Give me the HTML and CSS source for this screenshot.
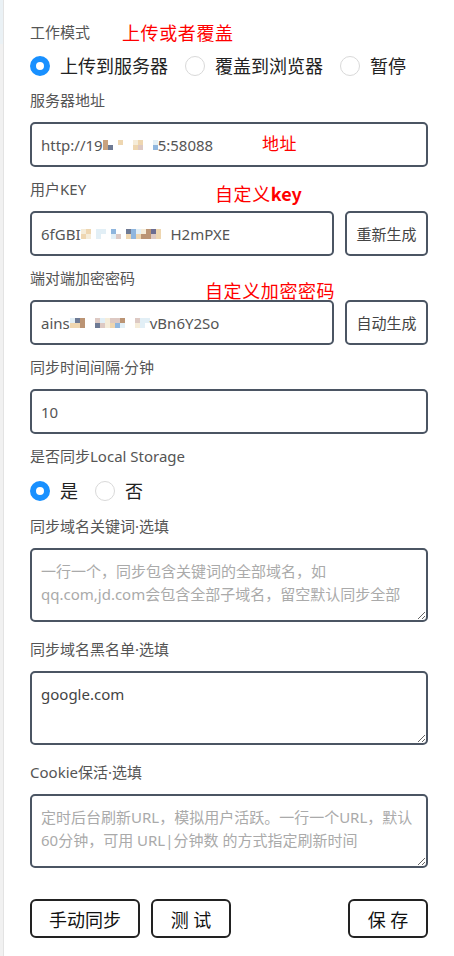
FILE: index.html
```html
<!DOCTYPE html>
<html lang="zh-CN">
<head>
<meta charset="utf-8">
<title>同步设置</title>
<link rel="stylesheet" href="styles.css">
</head>
<body>
<div class="page">
  <div class="edge"><div class="edge-top"></div></div>
  <form class="panel">
    <div class="label">工作模式</div>
    <div class="radios">
      <span class="radio"><span class="dot on"></span>上传到服务器</span>
      <span class="radio"><span class="dot"></span>覆盖到浏览器</span>
      <span class="radio"><span class="dot"></span>暂停</span>
    </div>

    <div class="label">服务器地址</div>
    <div class="input">http://19<span class="mosaic m11">
      <i class="c1"></i><i></i><i></i><i class="c3"></i><i></i><i></i><i class="c5"></i><i class="c3"></i><i></i><i></i><i class="c7"></i>
      <i class="c1"></i><i class="c2"></i><i></i><i></i><i></i><i></i><i class="c3"></i><i class="c9"></i><i></i><i></i><i class="c4"></i>
    </span>5:58088</div>

    <div class="label">用户KEY</div>
    <div class="row">
      <div class="input grow">6fGBI<span class="mosaic m18">
        <i class="c5"></i><i class="c3"></i><i></i><i class="c7"></i><i class="c7"></i><i></i><i class="c4"></i><i></i><i></i><i class="c2"></i><i class="c4"></i><i class="c7"></i><i class="c5"></i><i class="c8"></i><i class="c6"></i><i class="c3"></i><i></i><i></i>
        <i class="c3"></i><i class="c5"></i><i></i><i class="c7"></i><i></i><i></i><i class="c7"></i><i class="c9"></i><i></i><i class="c3"></i><i class="c4"></i><i class="c3"></i><i class="c8"></i><i class="c8"></i><i class="c9"></i><i class="c3"></i><i></i><i></i>
      </span>H2mPXE</div>
      <button type="button" class="side-btn">重新生成</button>
    </div>

    <div class="label">端对端加密密码</div>
    <div class="row">
      <div class="input grow">ains<span class="mosaic m16">
        <i class="c7"></i><i class="c2"></i><i class="c8"></i><i></i><i></i><i class="c9"></i><i class="c7"></i><i class="c5"></i><i class="c9"></i><i class="c9"></i><i class="c8"></i><i></i><i></i><i class="c9"></i><i class="c7"></i><i class="c7"></i>
        <i class="c3"></i><i class="c3"></i><i class="c8"></i><i></i><i></i><i class="c2"></i><i class="c9"></i><i class="c5"></i><i class="c3"></i><i class="c4"></i><i class="c7"></i><i></i><i></i><i class="c5"></i><i class="c7"></i><i></i>
      </span>vBn6Y2So</div>
      <button type="button" class="side-btn">自动生成</button>
    </div>

    <div class="label">同步时间间隔·分钟</div>
    <div class="input">10</div>

    <div class="label">是否同步Local Storage</div>
    <div class="radios tall">
      <span class="radio"><span class="dot on"></span>是</span>
      <span class="radio"><span class="dot"></span>否</span>
    </div>

    <div class="label">同步域名关键词·选填</div>
    <textarea class="area" placeholder="一行一个，同步包含关键词的全部域名，如&#10;qq.com,jd.com会包含全部子域名，留空默认同步全部"></textarea>

    <div class="label">同步域名黑名单·选填</div>
    <textarea class="area">google.com</textarea>

    <div class="label">Cookie保活·选填</div>
    <textarea class="area" placeholder="定时后台刷新URL，模拟用户活跃。一行一个URL，默认&#10;60分钟，可用 URL|分钟数 的方式指定刷新时间"></textarea>

    <div class="actions">
      <button type="button" class="btn wide">手动同步</button>
      <button type="button" class="btn">测 试</button>
      <button type="button" class="btn push">保 存</button>
    </div>
  </form>

  <span class="note n1">上传或者覆盖</span>
  <span class="note n2">地址</span>
  <span class="note n3">自定义<b>key</b></span>
  <span class="note n4">自定义加密密码</span>
</div>
</body>
</html>
```

FILE: styles.css
```css
html, body {
  margin: 0;
  padding: 0;
  background: #ffffff;
}

body {
  font-family: "Noto Sans", "Noto Sans CJK SC", sans-serif;
  color: #333;
}

.page {
  position: relative;
  display: flex;
  width: 454px;
  min-height: 956px;
}

.edge {
  width: 3px;
  flex: none;
  background: #f1f1f1;
  border-right: 1px solid #e3e3e3;
}

.edge-top {
  height: 44px;
  background: #eaf1f5;
}

.panel {
  flex: 1;
  display: flex;
  flex-direction: column;
  gap: 11px;
  padding: 21px 26px 0 26px;
  margin: 0;
}

.label {
  height: 22px;
  line-height: 22px;
  font-size: 15px;
  color: #555;
  white-space: nowrap;
}

.radios {
  height: 24px;
  display: flex;
  align-items: center;
}

.radios.tall {
  height: 26px;
}

.radio {
  display: flex;
  align-items: center;
  gap: 10px;
  margin-right: 17px;
  font-size: 18px;
  color: #222;
  line-height: 24px;
}

.dot {
  width: 20px;
  height: 20px;
  box-sizing: border-box;
  border-radius: 50%;
  border: 1px solid #d9d9d9;
  background: #fff;
}

.dot.on {
  border: 6.5px solid #1890ff;
}

.row {
  display: flex;
  gap: 11px;
}

.input {
  height: 45px;
  box-sizing: border-box;
  border: 2px solid #4b5563;
  border-radius: 5px;
  padding: 0 9px;
  display: flex;
  align-items: center;
  font-size: 15px;
  color: #555;
  white-space: nowrap;
  overflow: hidden;
}

.grow {
  flex: 1;
  min-width: 0;
}

.mosaic {
  display: inline-grid;
  grid-template-rows: 5px 5px;
  margin-top: 1px;
}

.mosaic.m11 { grid-template-columns: repeat(11, 5px); }
.mosaic.m18 { grid-template-columns: repeat(18, 5px); }
.mosaic.m16 { grid-template-columns: repeat(16, 5px); }

.mosaic i { display: block; }
.c1 { background: #c9a27e; }
.c2 { background: #6e7a94; }
.c3 { background: #eed6b0; }
.c4 { background: #8fb6de; }
.c5 { background: #f5ecd9; }
.c6 { background: #6b6d92; }
.c7 { background: #e2eff6; }
.c8 { background: #bb9474; }
.c9 { background: #ddc9c3; }

.side-btn {
  width: 83px;
  height: 45px;
  flex: none;
  box-sizing: border-box;
  border: 2px solid #4b5563;
  border-radius: 5px;
  background: #fff;
  font-family: inherit;
  font-size: 15px;
  color: #444;
  padding: 0;
}

.area {
  display: block;
  width: 100%;
  height: 74px;
  box-sizing: border-box;
  border: 2px solid #4b5563;
  border-radius: 5px;
  padding: 10px 6px 0 9px;
  margin: 0 0 5px 0;
  font-family: inherit;
  font-size: 15px;
  line-height: 23px;
  color: #444;
  resize: vertical;
  outline: none;
}

.area::placeholder {
  color: #aaa;
}

.actions {
  display: flex;
  gap: 11px;
  margin-top: 15px;
}

.btn {
  width: 80px;
  height: 39px;
  box-sizing: border-box;
  border: 2px solid #222;
  border-radius: 6px;
  background: #fff;
  font-family: inherit;
  font-size: 18px;
  color: #111;
  padding: 0;
}

.btn.wide {
  width: 110px;
}

.btn.push {
  margin-left: auto;
}

.note {
  position: absolute;
  color: #ff0000;
  font-family: "Noto Sans CJK SC", sans-serif;
  font-size: 18px;
  line-height: 24px;
  letter-spacing: 0.6px;
  white-space: nowrap;
}

.note b {
  font-weight: 700;
  letter-spacing: 0;
}

.n1 { left: 122px; top: 20px; }
.n2 { left: 262px; top: 131px; font-size: 17px; }
.n3 { left: 215px; top: 181px; }
.n4 { left: 205px; top: 278px; }
```
